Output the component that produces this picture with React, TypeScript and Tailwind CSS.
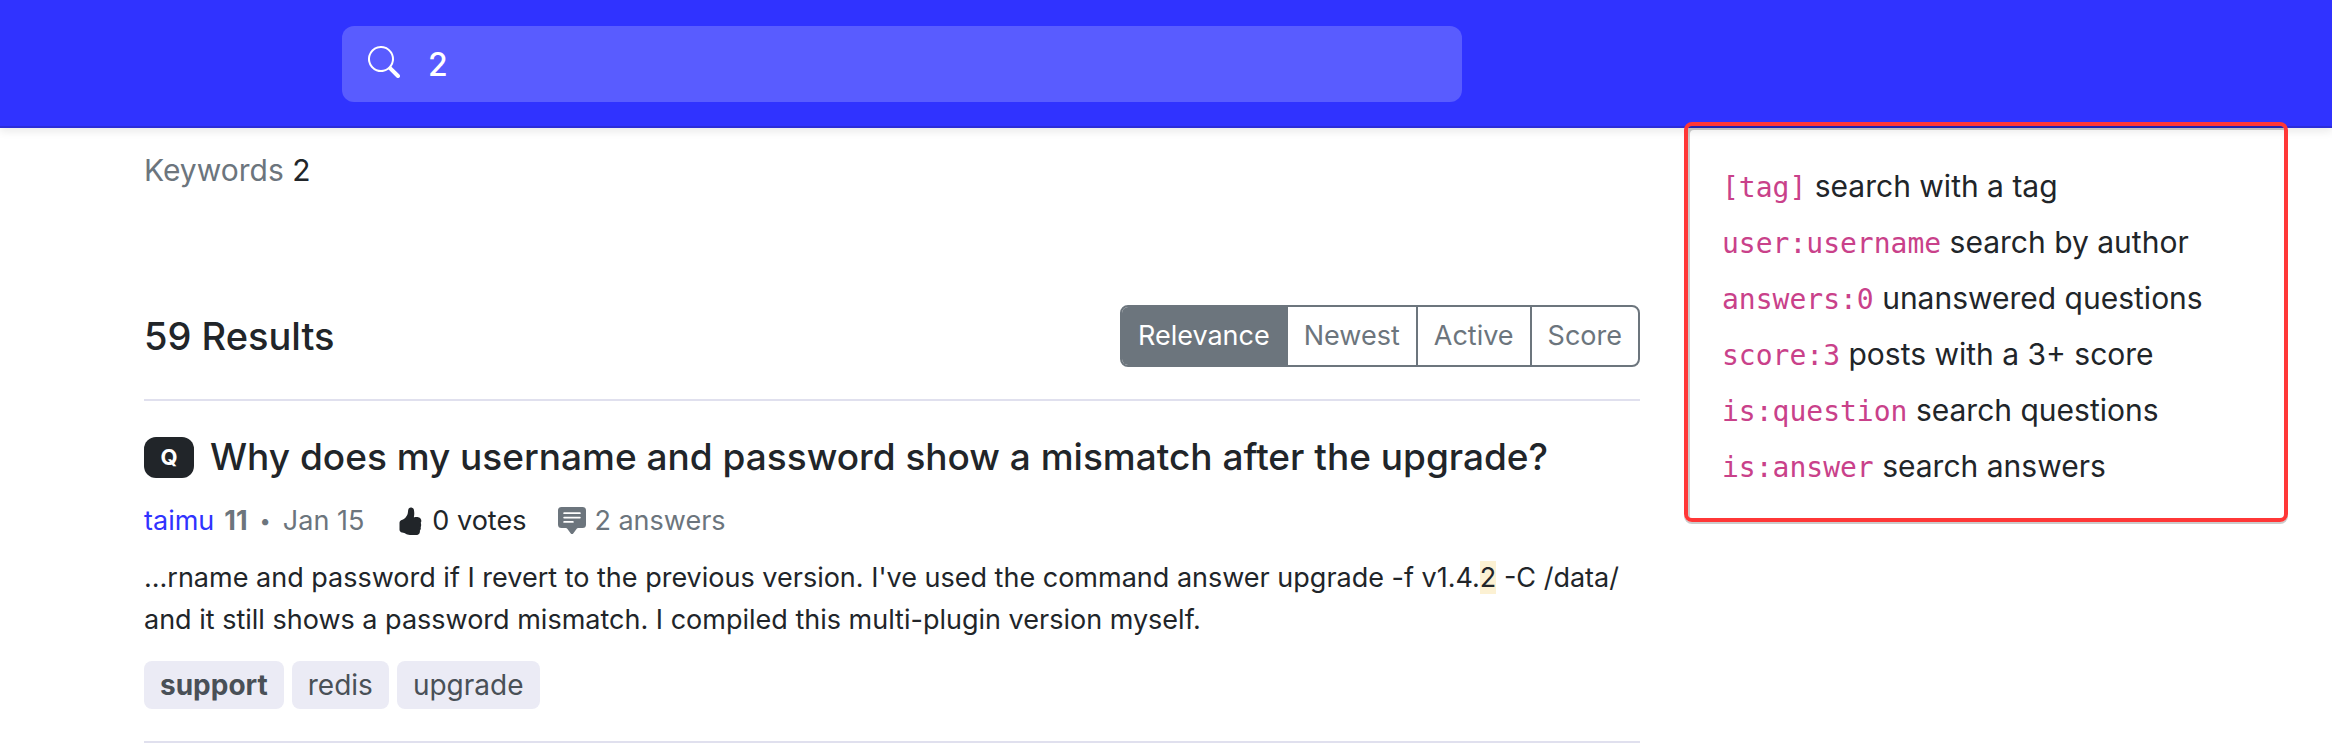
import { BsChatSquareTextFill, BsHandThumbsUpFill, BsSearch } from "react-icons/bs";

const sorts = ["Relevance", "Newest", "Active", "Score"];

const tags = [
  { name: "support", reserved: true },
  { name: "redis", reserved: false },
  { name: "upgrade", reserved: false },
];

const tips = [
  { code: "[tag]", text: "search with a tag" },
  { code: "user:username", text: "search by author" },
  { code: "answers:0", text: "unanswered questions" },
  { code: "score:3", text: "posts with a 3+ score" },
  { code: "is:question", text: "search questions" },
  { code: "is:answer", text: "search answers" },
];

function Header() {
  return (
    <header className="h-32 bg-[#3033ff] border-b-2 border-[#2b2dd9] shadow-[0_4px_8px_rgba(0,0,0,0.08)] pt-[26px] pl-[342px] pr-11">
      <form className="flex items-center w-full max-w-[1120px] h-[76px] rounded-xl bg-[#595cff] text-white pl-[26px]">
        <BsSearch className="w-8 h-8 shrink-0 mb-1" />
        <input
          type="text"
          aria-label="Search"
          defaultValue="2"
          className="flex-1 min-w-0 h-full bg-transparent pl-7 text-[32px] font-medium outline-none"
        />
      </form>
    </header>
  );
}

function SearchItem() {
  return (
    <article className="py-8 border-b-2 border-[#e0e0ee]">
      <h2 className="flex items-center gap-4 text-[37px] leading-[48px] font-medium">
        <span className="flex items-center justify-center w-[50px] h-[41px] rounded-xl bg-[#212529] text-white text-[22px] font-bold">Q</span>
        <a href="#">Why does my username and password show a mismatch after the upgrade?</a>
      </h2>

      <div className="flex items-center mt-5 text-[27px] leading-10 text-[#6c757d]">
        <a href="#" className="text-[#3033ff]">taimu</a>
        <span className="ml-2.5 font-bold">11</span>
        <span className="mx-3 text-xl">•</span>
        <time>Jan 15</time>
        <span className="flex items-center gap-2 ml-8 text-[#212529]">
          <BsHandThumbsUpFill className="w-7 h-7" />
          0 votes
        </span>
        <span className="flex items-center gap-2 ml-8">
          <BsChatSquareTextFill className="w-7 h-7" />
          2 answers
        </span>
      </div>

      <p className="mt-4 text-[27px] leading-[42px]">
        ...rname and password if I revert to the previous version. I've used the command answer upgrade -f v1.4.
        <mark className="bg-[#fcf1d3] text-inherit">2</mark> -C /data/ and it still shows a password mismatch. I
        compiled this multi-plugin version myself.
      </p>

      <div className="flex gap-2 mt-5">
        {tags.map((tag) => (
          <a
            key={tag.name}
            href="#"
            className={`h-12 px-4 rounded-lg bg-[#ebebf5] text-[#495057] text-[28px] leading-[48px] ${tag.reserved ? "font-bold" : ""}`}
          >
            {tag.name}
          </a>
        ))}
      </div>
    </article>
  );
}

export default function App() {
  return (
    <div className="min-h-screen bg-white text-[#212529] font-['Inter',sans-serif]">
      <Header />
      <div className="flex items-start gap-11 pl-36 pr-11">
        <main className="flex-1 min-w-0">
          <div className="pt-6 text-[30px] leading-9">
            <span className="text-[#6c757d]">Keywords</span> 2
          </div>

          <div className="flex items-center justify-between mt-[117px] pb-8 border-b-2 border-[#e0e0ee]">
            <h1 className="text-[38px] leading-[48px] font-medium">59 Results</h1>
            <div className="flex h-[62px] rounded-lg border-2 border-[#6c757d] overflow-hidden text-[27px] divide-x-2 divide-[#6c757d]">
              {sorts.map((sort, i) => (
                <button
                  key={sort}
                  type="button"
                  className={`px-4 ${i === 0 ? "bg-[#6c757d] text-white" : "text-[#6c757d]"}`}
                >
                  {sort}
                </button>
              ))}
            </div>
          </div>

          <SearchItem />
        </main>

        <aside className="relative w-[604px] shrink-0 -mt-1.5 rounded-lg border-4 border-[#ff3737] pt-8 pb-6 pl-[34px] shadow-[0_2px_0_#cccccc,inset_2px_4px_0_rgba(0,0,0,0.2)]">
          {tips.map((tip) => (
            <div key={tip.code} className="text-[30px] leading-[56px] whitespace-nowrap">
              <code className="text-[28px] leading-none text-[#c9418a] font-['DejaVu_Sans_Mono',monospace]">{tip.code}</code> {tip.text}
            </div>
          ))}
        </aside>
      </div>
    </div>
  );
}
